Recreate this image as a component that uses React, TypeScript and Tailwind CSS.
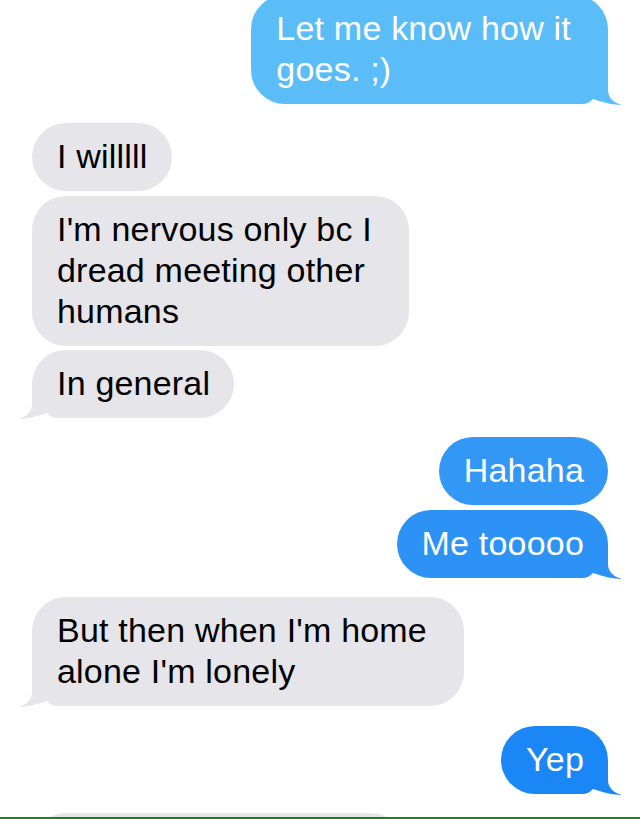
import React from "react";

type Side = "left" | "right";

function Tail({ side, fill }: { side: Side; fill: string }) {
  return (
    <svg
      viewBox="-34 -34 49 36"
      width={49}
      height={36}
      className={
        side === "right"
          ? `absolute right-[-15px] bottom-[-2px] ${fill}`
          : `absolute left-[-15px] bottom-[-2px] -scale-x-100 ${fill}`
      }
    >
      <path d="M -34 0 L -34 -34 L 0 -34 L 0 -14 C 0 -6 6 -1 14 1 C 5 1 -6 -2 -15 -5 C -18 -2 -21 0 -26 0 Z" />
    </svg>
  );
}

function Bubble({
  side,
  bg,
  fill,
  text,
  tail,
  multi,
  children,
}: {
  side: Side;
  bg: string;
  fill: string;
  text: string;
  tail?: boolean;
  multi?: boolean;
  children: React.ReactNode;
}) {
  return (
    <div className={side === "right" ? "flex justify-end" : "flex justify-start"}>
      <div
        className={`relative rounded-[34px] pl-[25px] ${multi ? "pr-[37px]" : "pr-[24px]"} pt-[13px] pb-[14px] text-[34px] leading-[41px] tracking-[0.2px] whitespace-nowrap ${bg} ${text}`}
      >
        {tail && <Tail side={side} fill={fill} />}
        <span className="relative">{children}</span>
      </div>
    </div>
  );
}

export default function App() {
  const gray = "bg-[#e5e5ea]";
  const grayFill = "fill-[#e5e5ea]";
  return (
    <div
      className="w-[640px] h-[819px] bg-white flex flex-col overflow-hidden"
      style={{ fontFamily: '"Liberation Sans", Arial, sans-serif' }}
    >
      <div className="flex-1 overflow-hidden">
        <div className="mt-[-5px] px-[32px] flex flex-col">
          <Bubble side="right" bg="bg-[#5bbdf7]" fill="fill-[#5bbdf7]" text="text-white" tail multi>
            Let me know how it
            <br />
            goes. ;)
          </Bubble>

          <div className="h-[19px]" />
          <Bubble side="left" bg={gray} fill={grayFill} text="text-black">
            I willlll
          </Bubble>
          <div className="h-[5px]" />
          <Bubble side="left" bg={gray} fill={grayFill} text="text-black" multi>
            I'm nervous only bc I
            <br />
            dread meeting other
            <br />
            humans
          </Bubble>
          <div className="h-[4px]" />
          <Bubble side="left" bg={gray} fill={grayFill} text="text-black" tail>
            In general
          </Bubble>

          <div className="h-[19px]" />
          <Bubble side="right" bg="bg-[#3297f5]" fill="fill-[#3297f5]" text="text-white">
            Hahaha
          </Bubble>
          <div className="h-[5px]" />
          <Bubble side="right" bg="bg-[#2c92f5]" fill="fill-[#2c92f5]" text="text-white" tail>
            Me tooooo
          </Bubble>

          <div className="h-[19px]" />
          <Bubble side="left" bg={gray} fill={grayFill} text="text-black" tail multi>
            But then when I'm home
            <br />
            alone I'm lonely
          </Bubble>

          <div className="h-[20px]" />
          <Bubble side="right" bg="bg-[#1b86f5]" fill="fill-[#1b86f5]" text="text-white" tail>
            Yep
          </Bubble>

          <div className="h-[19px]" />
          <div className="flex justify-start">
            <div className="w-[373px] h-[69px] rounded-[34px] bg-[#e5e5ea]" />
          </div>
        </div>
      </div>
      <div className="h-[2px] bg-[#138a13]" />
    </div>
  );
}
